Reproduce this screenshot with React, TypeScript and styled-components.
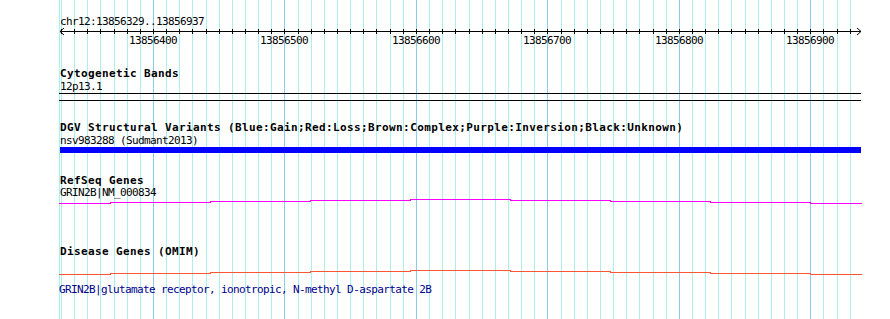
import styled, { createGlobalStyle } from "styled-components";

const GlobalStyle = createGlobalStyle`
    body {
        margin: 0;
        background: #ffffff;
    }
`;

// view: 13856329..13856937 drawn between x=60 and x=861
const START = 13856329;
const PX_PER_BP = 1.3146;
const X_ORIGIN = 153 - (13856400 - START) * PX_PER_BP;
const TRACK_LEFT = 59;
const TRACK_RIGHT = 861;

function bpToX(bp: number) {
    return Math.round(X_ORIGIN + (bp - START) * PX_PER_BP);
}

const gridPositions: number[] = [];
for (let bp = 13856330; bp <= 13856930; bp += 10) {
    gridPositions.push(bp);
}

const majorPositions = [13856400, 13856500, 13856600, 13856700, 13856800, 13856900];

// exon-ish step segments, offset in px from the top of the gene strip
const geneSteps = [
    { from: 59, to: 110, dy: 4 },
    { from: 110, to: 210, dy: 3 },
    { from: 210, to: 310, dy: 2 },
    { from: 310, to: 410, dy: 1 },
    { from: 410, to: 510, dy: 0 },
    { from: 510, to: 610, dy: 1 },
    { from: 610, to: 710, dy: 2 },
    { from: 710, to: 810, dy: 3 },
    { from: 810, to: 861, dy: 4 },
];

const MONO = '"DejaVu Sans Mono", "Liberation Mono", monospace';

const Page = styled.div`
    position: relative;
    width: 890px;
    height: 319px;
    overflow: hidden;
    background: #ffffff;
`;

const GridLayer = styled.svg`
    position: absolute;
    top: 0;
    left: 0;
    z-index: 0;
`;

const Content = styled.div`
    position: relative;
    z-index: 1;
    padding-top: 15px;
    display: flex;
    flex-direction: column;
`;

const Label = styled.div<{ color?: string; indent?: number; lineHeight?: number; gap?: number }>`
    margin-top: ${(props) => props.gap ?? 0}px;
    padding-left: ${(props) => props.indent ?? 60}px;
    font-family: ${MONO};
    font-size: 11px;
    line-height: ${(props) => props.lineHeight ?? 13}px;
    height: ${(props) => props.lineHeight ?? 13}px;
    letter-spacing: -0.62px;
    color: ${(props) => props.color ?? "#000000"};
    white-space: pre;
`;

const TrackTitle = styled.div`
    padding-left: 60px;
    font-family: ${MONO};
    font-weight: bold;
    font-size: 11px;
    line-height: 13px;
    height: 13px;
    letter-spacing: 0.38px;
    color: #000000;
    white-space: pre;
`;

const Track = styled.section<{ top: number }>`
    margin-top: ${(props) => props.top}px;
    display: flex;
    flex-direction: column;
`;

const BandBox = styled.div`
    margin-left: ${TRACK_LEFT}px;
    width: ${TRACK_RIGHT - TRACK_LEFT}px;
    height: 8px;
    box-sizing: border-box;
    border-top: 1px solid #000000;
    border-bottom: 1px solid #000000;
`;

const VariantBar = styled.div`
    margin-left: 60px;
    width: ${TRACK_RIGHT - 60}px;
    height: 6px;
    background: #0000ff;
`;

const Strip = styled.svg<{ gap?: number }>`
    display: block;
    margin-top: ${(props) => props.gap ?? 0}px;
`;

function Ruler() {
    return (
        <Strip width={890} height={20} shapeRendering="crispEdges">
            <rect x={60} y={3} width={TRACK_RIGHT - 60} height={1} fill="#000" />
            {gridPositions.map((bp) => (
                <rect key={bp} x={bpToX(bp)} y={1} width={1} height={5} fill="#000" />
            ))}
            <polyline points="64,0 60,3.5 64,7" fill="none" stroke="#000" strokeWidth={1} shapeRendering="auto" />
            <polyline points="857,0 861,3.5 857,7" fill="none" stroke="#000" strokeWidth={1} shapeRendering="auto" />
            {majorPositions.map((bp) => (
                <text
                    key={bp}
                    x={bpToX(bp)}
                    y={16}
                    textAnchor="middle"
                    fontFamily={MONO}
                    fontSize={11}
                    letterSpacing={-0.62}
                    fill="#000"
                >
                    {bp}
                </text>
            ))}
        </Strip>
    );
}

function GeneLine({ color, gap }: { color: string; gap?: number }) {
    return (
        <Strip width={890} height={5} gap={gap} shapeRendering="crispEdges">
            {geneSteps.map((s) => (
                <rect key={s.from} x={s.from} y={s.dy} width={s.to - s.from + 1} height={1} fill={color} />
            ))}
        </Strip>
    );
}

export default function App() {
    return (
        <>
            <GlobalStyle />
            <Page>
                <GridLayer width={890} height={319} shapeRendering="crispEdges">
                    <rect x={59} y={0} width={1} height={319} fill="#aaeeee" />
                    {gridPositions.map((bp) => (
                        <rect
                            key={bp}
                            x={bpToX(bp)}
                            y={0}
                            width={1}
                            height={319}
                            fill={bp % 100 === 0 ? "#88ccee" : "#aaeeee"}
                        />
                    ))}
                </GridLayer>

                <Content>
                    <Label>chr12:13856329..13856937</Label>
                    <Ruler />

                    <Track top={19}>
                        <TrackTitle>Cytogenetic Bands</TrackTitle>
                        <Label>12p13.1</Label>
                        <BandBox />
                    </Track>

                    <Track top={20}>
                        <TrackTitle>DGV Structural Variants (Blue:Gain;Red:Loss;Brown:Complex;Purple:Inversion;Black:Unknown)</TrackTitle>
                        <Label>nsv983288 (Sudmant2013)</Label>
                        <VariantBar />
                    </Track>

                    <Track top={21}>
                        <TrackTitle>RefSeq Genes</TrackTitle>
                        <Label lineHeight={12}>GRIN2B|NM_000834</Label>
                        <GeneLine color="#ff00ff" />
                    </Track>

                    <Track top={41}>
                        <TrackTitle>Disease Genes (OMIM)</TrackTitle>
                        <GeneLine color="#ff5533" gap={12} />
                        <Label color="#00008b" indent={59} gap={8}>
                            GRIN2B|glutamate receptor, ionotropic, N-methyl D-aspartate 2B
                        </Label>
                    </Track>
                </Content>
            </Page>
        </>
    );
}
